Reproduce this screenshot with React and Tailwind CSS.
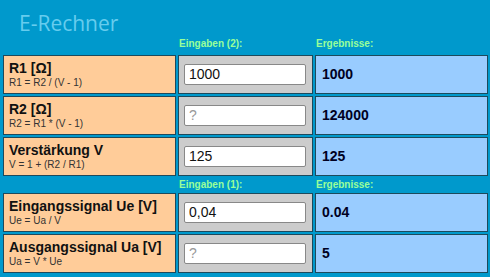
import React from 'react'

const rows1 = [
  { title: 'R1 [Ω]', formula: 'R1 = R2 / (V - 1)', value: '1000', result: '1000' },
  { title: 'R2 [Ω]', formula: 'R2 = R1 * (V - 1)', value: '', result: '124000' },
  { title: 'Verstärkung V', formula: 'V = 1 + (R2 / R1)', value: '125', result: '125' },
]

const rows2 = [
  { title: 'Eingangssignal Ue [V]', formula: 'Ue = Ua / V', value: '0,04', result: '0.04' },
  { title: 'Ausgangssignal Ua [V]', formula: 'Ua = V * Ue', value: '', result: '5' },
]

function HeadRow({ n, first }) {
  return (
    <div className={`grid grid-cols-[173px_135px_173px] gap-x-[2px] items-end ${first ? 'h-[20px] pb-[6px]' : 'h-[17px] pb-[3px]'}`}>
      <div></div>
      <div className='text-[10px] leading-none font-bold text-[#99ff99] pl-[1px]'>Eingaben ({n}):</div>
      <div className='text-[10px] leading-none font-bold text-[#99ff99] pl-[1px]'>Ergebnisse:</div>
    </div>
  )
}

function Row({ item }) {
  return (
    <div className='grid grid-cols-[173px_135px_173px] gap-x-[2px] h-[39px]'>
      <div className='bg-[#ffcc99] border border-[#1d4a5c] px-[5px] flex flex-col justify-center leading-none'>
        <span className='text-[14px] font-bold text-[#111] whitespace-nowrap'>{item.title}</span>
        <span className='text-[10px] text-[#333] mt-[3px]'>{item.formula}</span>
      </div>
      <div className='bg-[#cccccc] border border-[#1d4a5c] flex items-center pl-[5px]'>
        <input
          className='w-[122px] h-[21px] bg-white border border-[#888] rounded-[2px] px-[4px] text-[14px] text-[#111] outline-none placeholder:text-[#999]'
          defaultValue={item.value}
          placeholder='?'
        />
      </div>
      <div className='bg-[#99ccff] border border-[#1d4a5c] flex items-center pl-[6px]'>
        <span className='text-[14px] font-bold text-[#000022]'>{item.result}</span>
      </div>
    </div>
  )
}

export default function App() {
  return (
    <div className='w-[490px] h-[277px] bg-[#0099cc] pl-[3px] overflow-hidden' style={{ fontFamily: '"Liberation Sans", Arial, sans-serif' }}>
      <div className='h-[35px] pl-[16px] pt-[13px] text-[21px] text-[#66ccee] leading-none' style={{ fontFamily: '"Open Sans", sans-serif' }}>
        E-Rechner
      </div>
      <HeadRow n={2} first />
      <div className='flex flex-col gap-[2px]'>
        {rows1.map((r, i) => <Row key={i} item={r} />)}
      </div>
      <HeadRow n={1} />
      <div className='flex flex-col gap-[2px]'>
        {rows2.map((r, i) => <Row key={i} item={r} />)}
      </div>
    </div>
  )
}
